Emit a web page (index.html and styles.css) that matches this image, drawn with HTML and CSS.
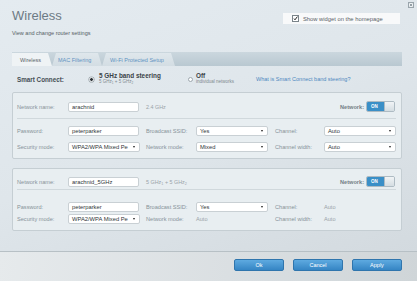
FILE: index.html
```
<!DOCTYPE html>
<html lang="en">
<head>
    <meta charset="UTF-8">
    <meta name="viewport" content="width=device-width, initial-scale=1.0">
    <title>Wireless</title>
    <link rel="stylesheet" href="styles.css">
</head>
<body>
    <div class="main">
        <header class="header">
            <div>
                <h1 class="title">Wireless</h1>
                <p class="subtitle">View and change router settings</p>
            </div>
            <label class="widget">
                <span class="check">
                    <svg width="5" height="5" viewBox="0 0 5 5"><path d="M1 2.6 L2 3.8 L4.4 0.6" fill="none" stroke="#222" stroke-width="1"/></svg>
                </span>
                Show widget on the homepage
            </label>
        </header>

        <svg class="close" width="6" height="6" viewBox="0 0 6 6">
            <rect x="0.5" y="0.5" width="5" height="5" fill="#eef2f4" stroke="#9aa5ac"/>
            <path d="M1.8 1.8 L4.2 4.2 M4.2 1.8 L1.8 4.2" stroke="#7d8a92" stroke-width="0.8"/>
        </svg>

        <nav class="tabs">
            <span class="tab tab-wireless active">Wireless</span>
            <span class="tab tab-mac">MAC Filtering</span>
            <span class="tab tab-wps">Wi-Fi Protected Setup</span>
        </nav>

        <div class="smart">
            <span class="smart-label">Smart Connect:</span>
            <span class="option option-steering">
                <span class="radio checked"></span>
                <span class="option-text">
                    <b class="opt-title">5 GHz band steering</b>
                    <span class="opt-sub">5 GHz<sub>1</sub> + 5 GHz<sub>2</sub></span>
                </span>
            </span>
            <span class="option option-off">
                <span class="radio"></span>
                <span class="option-text">
                    <b class="opt-title">Off</b>
                    <span class="opt-sub">individual networks</span>
                </span>
            </span>
            <a class="help" href="#">What is Smart Connect band steering?</a>
        </div>

        <!-- 2.4 GHz network -->
        <section class="panel">
            <div class="panel-top">
                <span class="label name-label">Network name:</span>
                <span class="input">arachnid</span>
                <span class="band">2.4 GHz</span>
                <span class="net-label">Network:</span>
                <span class="toggle"><span class="on">ON</span><span class="knob"></span></span>
            </div>
            <div class="grid">
                <span class="label">Password:</span>
                <span class="input">peterparker</span>
                <span class="label">Broadcast SSID:</span>
                <span class="select"><span class="select-text">Yes</span><i class="arrow"></i></span>
                <span class="label">Channel:</span>
                <span class="select"><span class="select-text">Auto</span><i class="arrow"></i></span>

                <span class="label">Security mode:</span>
                <span class="select"><span class="select-text">WPA2/WPA Mixed Pe</span><i class="arrow"></i></span>
                <span class="label">Network mode:</span>
                <span class="select"><span class="select-text">Mixed</span><i class="arrow"></i></span>
                <span class="label">Channel width:</span>
                <span class="select"><span class="select-text">Auto</span><i class="arrow"></i></span>
            </div>
        </section>

        <!-- 5 GHz network -->
        <section class="panel panel-second">
            <div class="panel-top tight">
                <span class="label name-label">Network name:</span>
                <span class="input">arachnid_5GHz</span>
                <span class="band">5 GHz<sub>1</sub> + 5 GHz<sub>2</sub></span>
                <span class="net-label">Network:</span>
                <span class="toggle"><span class="on">ON</span><span class="knob"></span></span>
            </div>
            <div class="grid compact">
                <span class="label">Password:</span>
                <span class="input">peterparker</span>
                <span class="label">Broadcast SSID:</span>
                <span class="select"><span class="select-text">Yes</span><i class="arrow"></i></span>
                <span class="label">Channel:</span>
                <span class="value">Auto</span>

                <span class="label">Security mode:</span>
                <span class="select"><span class="select-text">WPA2/WPA Mixed Pe</span><i class="arrow"></i></span>
                <span class="label">Network mode:</span>
                <span class="value">Auto</span>
                <span class="label">Channel width:</span>
                <span class="value">Auto</span>
            </div>
        </section>
    </div>

    <footer class="footer">
        <button class="btn">Ok</button>
        <button class="btn">Cancel</button>
        <button class="btn">Apply</button>
    </footer>
</body>
</html>
```
FILE: styles.css
```
body {
    margin: 0;
    width: 417px;
    height: 281px;
    overflow: hidden;
    font-family: "Liberation Sans", Arial, sans-serif;
    background: #d8dfe3;
}
.main {
    position: relative;
    height: 252px;
    box-sizing: border-box;
    border-bottom: 1px solid #b7c0c5;
    background: linear-gradient(160deg, #e4ebf0 0%, #dfe6eb 50%, #d3dadf 100%);
}
.header {
    display: flex;
    justify-content: space-between;
    align-items: flex-start;
    padding: 8px 17px 0 12px;
}
.title {
    margin: 0;
    font-size: 13px;
    line-height: 15px;
    font-weight: normal;
    color: #6d7a85;
}
.subtitle {
    margin: 6px 0 0;
    font-size: 5.5px;
    line-height: 8px;
    color: #555e64;
}
.widget {
    display: flex;
    align-items: center;
    gap: 4px;
    width: 117px;
    height: 11px;
    margin-top: 5px;
    padding-left: 9px;
    box-sizing: border-box;
    background: #f8f9fa;
    font-size: 5.8px;
    color: #5a6268;
}
.check {
    display: block;
    width: 5px;
    height: 5px;
    border: 1px solid #7a848a;
    background: #fff;
    line-height: 0;
}
.close {
    position: absolute;
    top: 2px;
    right: 3px;
}
.tabs {
    display: flex;
    align-items: flex-end;
    height: 14px;
    margin: 15px 15px 0 12px;
    background: linear-gradient(#cbd7de, #b9c8d1);
}
.tab {
    display: flex;
    align-items: center;
    height: 13px;
    box-sizing: border-box;
    font-size: 5.5px;
    color: #5f93c2;
    background: linear-gradient(#dfe7ec, #d3dde3);
    clip-path: polygon(0 100%, 4px 0, calc(100% - 4px) 0, 100% 100%);
}
.tab.active {
    color: #59636a;
    background: #eff3f5;
    clip-path: polygon(0 100%, 0 0, calc(100% - 4px) 0, 100% 100%);
}
.tab-wireless {
    width: 40px;
    padding-left: 8px;
}
.tab-mac {
    width: 50px;
    padding-left: 6px;
}
.tab-wps {
    width: 73px;
    padding-left: 8px;
}
.smart {
    display: flex;
    align-items: center;
    height: 14px;
    margin: 6px 15px 6px 17px;
}
.smart-label {
    width: 72px;
    font-size: 6.3px;
    font-weight: bold;
    color: #454e54;
}
.option {
    display: flex;
    align-items: center;
    gap: 5px;
}
.option-steering {
    width: 99px;
}
.option-off {
    width: 68px;
    gap: 3px;
}
.radio {
    display: block;
    width: 5px;
    height: 5px;
    box-sizing: border-box;
    border: 1px solid #9ea8ae;
    border-radius: 50%;
    background: #fff;
}
.radio.checked {
    border: 1.5px solid #f4f6f7;
    background: #2c3338;
    box-shadow: 0 0 0 0.6px #9ea8ae;
}
.option-text {
    display: flex;
    flex-direction: column;
    margin-top: -3px;
}
.opt-title {
    font-size: 6.4px;
    line-height: 7px;
    color: #3a4247;
}
.opt-sub {
    font-size: 4.5px;
    line-height: 5px;
    color: #7f898f;
}
sub {
    font-size: 70%;
    vertical-align: -1px;
    line-height: 0;
}
.help {
    font-size: 5.5px;
    color: #4d88bf;
    text-decoration: none;
}
.panel {
    margin: 0 15px 0 12px;
    padding: 0 5px 0 4px;
    border: 1px solid #c5ced3;
    border-radius: 2px;
    background: #e8eef1;
}
.panel-second {
    margin-top: 9px;
}
.panel-top {
    display: flex;
    align-items: center;
    height: 11px;
    padding: 8px 0 6px;
    border-bottom: 1px solid #d0d8dc;
}
.panel-top.tight {
    padding: 7px 0 2px;
}
.label {
    font-size: 5.6px;
    color: #879299;
    white-space: nowrap;
}
.name-label {
    width: 51px;
}
.band {
    margin-left: 7px;
    font-size: 5.4px;
    color: #9aa3a8;
}
.net-label {
    margin-left: auto;
    margin-right: 2px;
    font-size: 5.6px;
    font-weight: bold;
    color: #737e85;
}
.toggle {
    display: flex;
    width: 29px;
    height: 11px;
    margin-right: 1px;
    box-sizing: border-box;
    border: 1px solid #aebbc3;
    border-radius: 2px;
    overflow: hidden;
}
.toggle .on {
    width: 17px;
    padding-left: 4px;
    box-sizing: border-box;
    background: #3a8fc7;
    color: #fff;
    font-size: 4.5px;
    font-weight: bold;
    line-height: 9px;
}
.toggle .knob {
    flex: 1;
    background: linear-gradient(#f1f4f6, #d4dde2);
    border-left: 1px solid #aebbc3;
}
.grid {
    display: grid;
    grid-template-columns: 44px 71px 43px 72px 42px 72px;
    grid-auto-rows: 10px;
    column-gap: 7px;
    row-gap: 6px;
    align-items: center;
    padding: 7px 0 6px;
}
.grid.compact {
    padding: 12px 0 6px;
    row-gap: 2px;
}
.input, .select {
    display: flex;
    align-items: center;
    width: 71px;
    height: 10px;
    box-sizing: border-box;
    padding: 0 3px;
    border: 1px solid #c9d0d4;
    border-radius: 2px;
    background: #fff;
    font-size: 5.8px;
    color: #2f3639;
    white-space: nowrap;
}
.select {
    width: 72px;
    justify-content: space-between;
}
.select-text {
    margin-right: 3px;
}
.arrow {
    flex: none;
    width: 0;
    height: 0;
    margin-right: 1px;
    border-left: 1.5px solid transparent;
    border-right: 1.5px solid transparent;
    border-top: 2.5px solid #222;
}
.value {
    font-size: 5.6px;
    color: #9aa3a8;
}
.footer {
    display: flex;
    justify-content: flex-end;
    gap: 9px;
    height: 29px;
    box-sizing: border-box;
    padding: 7px 15px 0 0;
    background: linear-gradient(100deg, #e6eaec 0%, #d9dee1 60%, #cfd5d8 100%);
}
.btn {
    width: 50px;
    height: 12px;
    padding: 0;
    border: 1px solid #2f75ad;
    border-radius: 2px;
    background: linear-gradient(#5eaae0, #3585c4);
    color: #fff;
    font-family: inherit;
    font-size: 5.5px;
    line-height: 10px;
    cursor: pointer;
}
```
